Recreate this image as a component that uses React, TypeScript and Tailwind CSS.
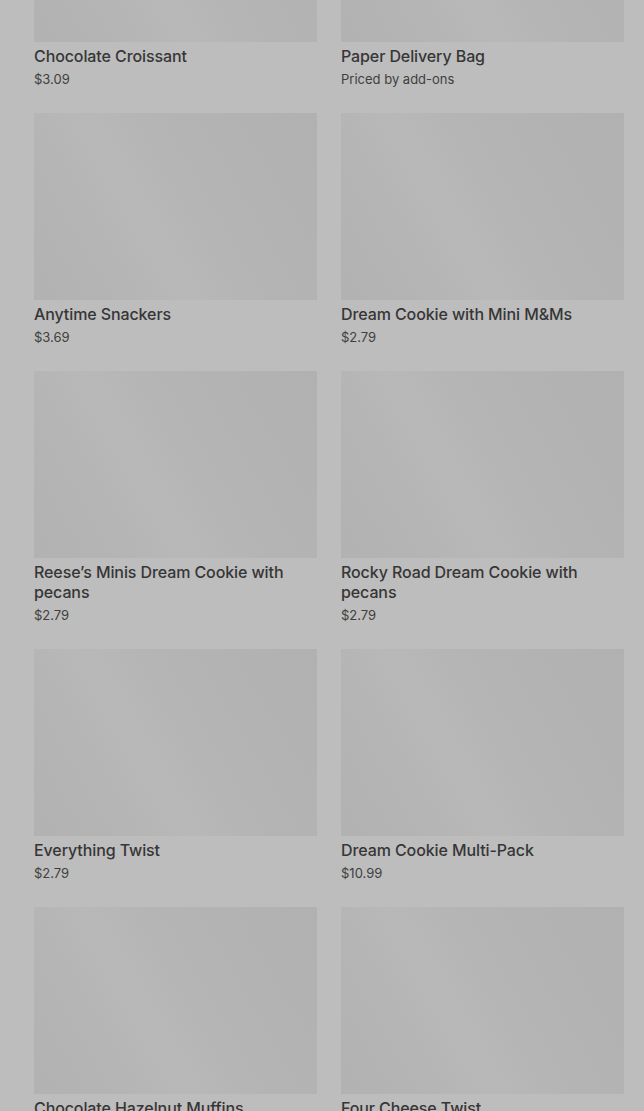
import React from "react";

const items: { name: string; price: string }[] = [
  { name: "Chocolate Croissant", price: "$3.09" },
  { name: "Paper Delivery Bag", price: "Priced by add-ons" },
  { name: "Anytime Snackers", price: "$3.69" },
  { name: "Dream Cookie with Mini M&Ms", price: "$2.79" },
  { name: "Reese’s Minis Dream Cookie with pecans", price: "$2.79" },
  { name: "Rocky Road Dream Cookie with pecans", price: "$2.79" },
  { name: "Everything Twist", price: "$2.79" },
  { name: "Dream Cookie Multi-Pack", price: "$10.99" },
  { name: "Chocolate Hazelnut Muffins", price: "$3.29" },
  { name: "Four Cheese Twist", price: "$2.79" },
];

export default function App() {
  return (
    <div
      className="h-[1111px] w-[644px] overflow-hidden bg-[#bdbdbd]"
      style={{ fontFamily: "Inter, 'Noto Sans', sans-serif" }}
    >
      <div className="mt-[-145px] grid grid-cols-2 gap-x-6 gap-y-6 pl-[34px] pr-[20px]">
        {items.map((it) => (
          <div key={it.name} className="flex flex-col">
            <div className="h-[187px] w-full bg-[linear-gradient(60deg,#b2b2b2_0%,#b4b4b4_20%,#b8b8b8_40%,#b4b4b4_60%,#b1b1b1_100%)]" />
            <div className="mt-1 text-[16px] font-medium leading-5 text-[#363636] tracking-[-0.1px]">
              {it.name}
            </div>
            <div className="mt-[3px] text-[13px] leading-5 text-[#404040]">{it.price}</div>
          </div>
        ))}
      </div>
    </div>
  );
}
